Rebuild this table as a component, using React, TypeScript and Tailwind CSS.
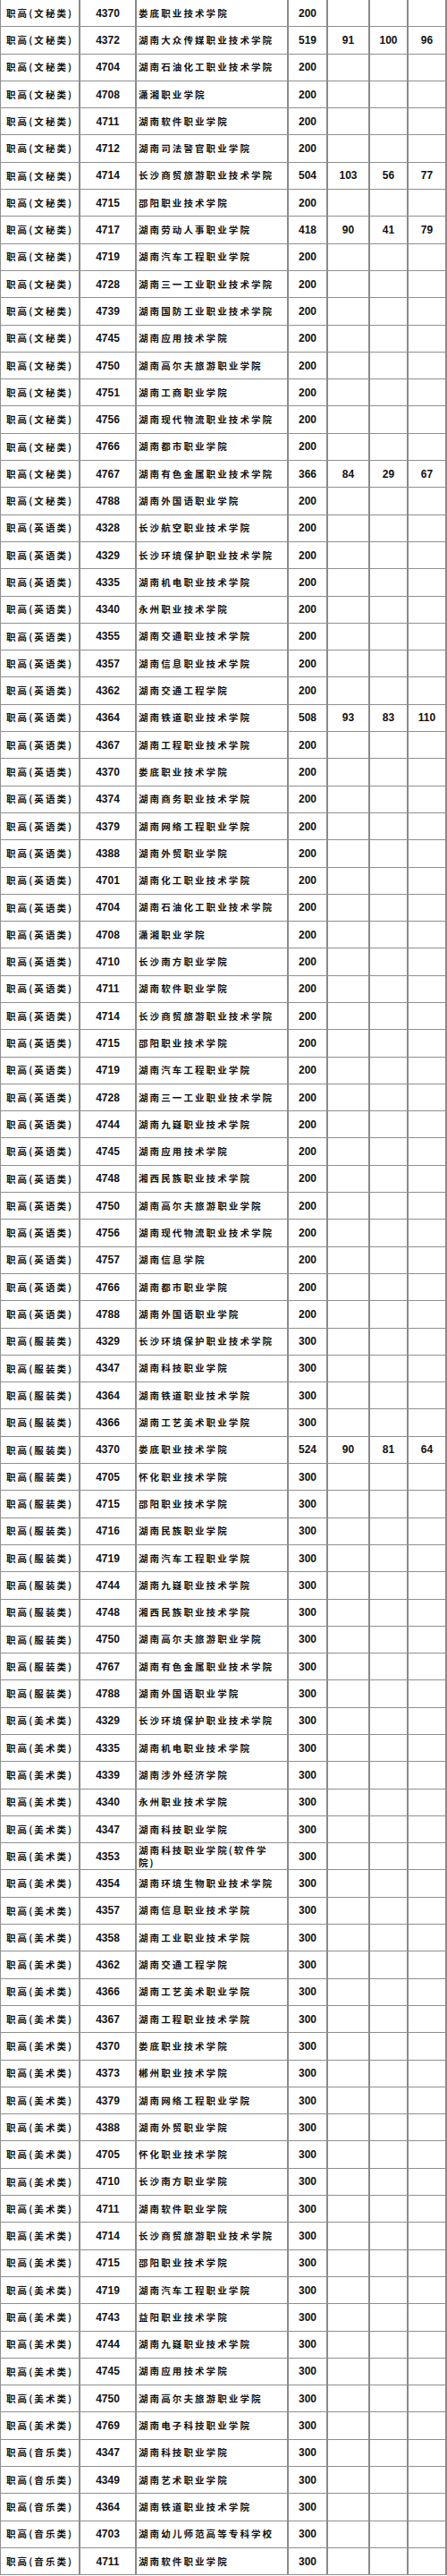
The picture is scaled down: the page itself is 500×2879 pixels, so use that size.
import React from 'react';

// [code, school, score?, a?, b?, c?] – score falls back to the group's default
type Row = [number, string, number?, number?, number?, number?];

const groups: { cat: string; base: number; rows: Row[] }[] = [
  {
    cat: '文秘类',
    base: 200,
    rows: [
      [4370, '娄底职业技术学院'],
      [4372, '湖南大众传媒职业技术学院', 519, 91, 100, 96],
      [4704, '湖南石油化工职业技术学院'],
      [4708, '潇湘职业学院'],
      [4711, '湖南软件职业学院'],
      [4712, '湖南司法警官职业学院'],
      [4714, '长沙商贸旅游职业技术学院', 504, 103, 56, 77],
      [4715, '邵阳职业技术学院'],
      [4717, '湖南劳动人事职业学院', 418, 90, 41, 79],
      [4719, '湖南汽车工程职业学院'],
      [4728, '湖南三一工业职业技术学院'],
      [4739, '湖南国防工业职业技术学院'],
      [4745, '湖南应用技术学院'],
      [4750, '湖南高尔夫旅游职业学院'],
      [4751, '湖南工商职业学院'],
      [4756, '湖南现代物流职业技术学院'],
      [4766, '湖南都市职业学院'],
      [4767, '湖南有色金属职业技术学院', 366, 84, 29, 67],
      [4788, '湖南外国语职业学院'],
    ],
  },
  {
    cat: '英语类',
    base: 200,
    rows: [
      [4328, '长沙航空职业技术学院'],
      [4329, '长沙环境保护职业技术学院'],
      [4335, '湖南机电职业技术学院'],
      [4340, '永州职业技术学院'],
      [4355, '湖南交通职业技术学院'],
      [4357, '湖南信息职业技术学院'],
      [4362, '湖南交通工程学院'],
      [4364, '湖南铁道职业技术学院', 508, 93, 83, 110],
      [4367, '湖南工程职业技术学院'],
      [4370, '娄底职业技术学院'],
      [4374, '湖南商务职业技术学院'],
      [4379, '湖南网络工程职业学院'],
      [4388, '湖南外贸职业学院'],
      [4701, '湖南化工职业技术学院'],
      [4704, '湖南石油化工职业技术学院'],
      [4708, '潇湘职业学院'],
      [4710, '长沙南方职业学院'],
      [4711, '湖南软件职业学院'],
      [4714, '长沙商贸旅游职业技术学院'],
      [4715, '邵阳职业技术学院'],
      [4719, '湖南汽车工程职业学院'],
      [4728, '湖南三一工业职业技术学院'],
      [4744, '湖南九嶷职业技术学院'],
      [4745, '湖南应用技术学院'],
      [4748, '湘西民族职业技术学院'],
      [4750, '湖南高尔夫旅游职业学院'],
      [4756, '湖南现代物流职业技术学院'],
      [4757, '湖南信息学院'],
      [4766, '湖南都市职业学院'],
      [4788, '湖南外国语职业学院'],
    ],
  },
  {
    cat: '服装类',
    base: 300,
    rows: [
      [4329, '长沙环境保护职业技术学院'],
      [4347, '湖南科技职业学院'],
      [4364, '湖南铁道职业技术学院'],
      [4366, '湖南工艺美术职业学院'],
      [4370, '娄底职业技术学院', 524, 90, 81, 64],
      [4705, '怀化职业技术学院'],
      [4715, '邵阳职业技术学院'],
      [4716, '湖南民族职业学院'],
      [4719, '湖南汽车工程职业学院'],
      [4744, '湖南九嶷职业技术学院'],
      [4748, '湘西民族职业技术学院'],
      [4750, '湖南高尔夫旅游职业学院'],
      [4767, '湖南有色金属职业技术学院'],
      [4788, '湖南外国语职业学院'],
    ],
  },
  {
    cat: '美术类',
    base: 300,
    rows: [
      [4329, '长沙环境保护职业技术学院'],
      [4335, '湖南机电职业技术学院'],
      [4339, '湖南涉外经济学院'],
      [4340, '永州职业技术学院'],
      [4347, '湖南科技职业学院'],
      [4353, '湖南科技职业学院(软件学院)'],
      [4354, '湖南环境生物职业技术学院'],
      [4357, '湖南信息职业技术学院'],
      [4358, '湖南工业职业技术学院'],
      [4362, '湖南交通工程学院'],
      [4366, '湖南工艺美术职业学院'],
      [4367, '湖南工程职业技术学院'],
      [4370, '娄底职业技术学院'],
      [4373, '郴州职业技术学院'],
      [4379, '湖南网络工程职业学院'],
      [4388, '湖南外贸职业学院'],
      [4705, '怀化职业技术学院'],
      [4710, '长沙南方职业学院'],
      [4711, '湖南软件职业学院'],
      [4714, '长沙商贸旅游职业技术学院'],
      [4715, '邵阳职业技术学院'],
      [4719, '湖南汽车工程职业学院'],
      [4743, '益阳职业技术学院'],
      [4744, '湖南九嶷职业技术学院'],
      [4745, '湖南应用技术学院'],
      [4750, '湖南高尔夫旅游职业学院'],
      [4769, '湖南电子科技职业学院'],
    ],
  },
  {
    cat: '音乐类',
    base: 300,
    rows: [
      [4347, '湖南科技职业学院'],
      [4349, '湖南艺术职业学院'],
      [4364, '湖南铁道职业技术学院'],
      [4703, '湖南幼儿师范高等专科学校'],
      [4711, '湖南软件职业学院'],
    ],
  },
];

const cjk = "font-['Noto_Sans_CJK_SC','Noto_Sans',sans-serif]";
const num = "font-['Liberation_Sans',Arial,sans-serif] text-[12px] font-bold";
const cell = 'flex items-center border-r-2 border-[#8a8a8a]';

export default function App() {
  return (
    <div className="w-[500px] bg-white text-[#111]">
      {groups.map((g) =>
        g.rows.map(([code, school, score, a, b, c], i) => (
          <div
            key={g.cat + code + i}
            className="flex h-[30.3px] border-b border-l border-[#8f8f8f]"
          >
            <div
              className={`${cell} ${cjk} w-[89px] shrink-0 pl-[6px] text-[10.5px] font-semibold tracking-[2.1px]`}
            >
              职高({g.cat})
            </div>
            <div className={`${cell} ${num} w-[63px] shrink-0 justify-center`}>{code}</div>
            <div
              className={`${cell} ${cjk} w-[170px] shrink-0 pl-[2px] pr-[14px] text-[10.5px] leading-[14px] font-semibold tracking-[2.1px]`}
            >
              {school}
            </div>
            <div className={`${cell} ${num} w-[44px] shrink-0 justify-center`}>{score ?? g.base}</div>
            <div className={`${cell} ${num} w-[47px] shrink-0 justify-center`}>{a ?? ''}</div>
            <div className={`${cell} ${num} w-[43px] shrink-0 justify-center`}>{b ?? ''}</div>
            <div className={`${cell} ${num} flex-1 justify-center`}>{c ?? ''}</div>
          </div>
        ))
      )}
    </div>
  );
}
